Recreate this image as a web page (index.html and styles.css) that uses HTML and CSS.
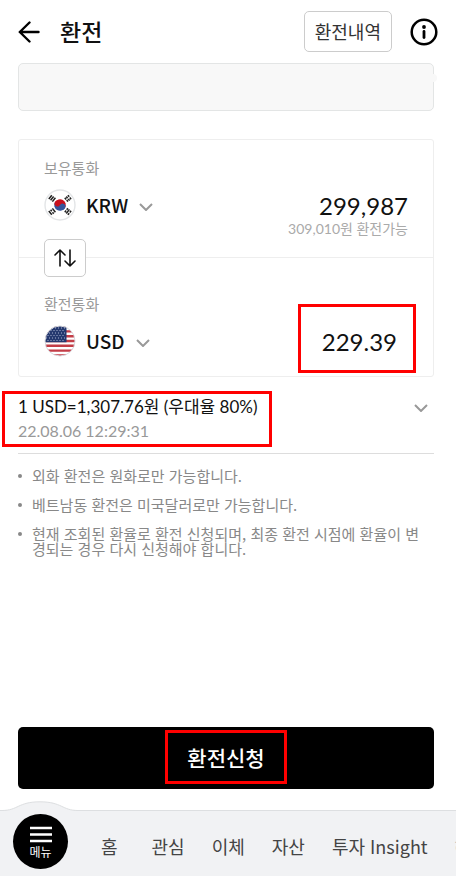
FILE: index.html
```html
<!DOCTYPE html>
<html lang="ko">
<head>
    <meta charset="UTF-8">
    <meta name="viewport" content="width=device-width, initial-scale=1.0">
    <title>환전</title>
    <link rel="stylesheet" href="styles.css">
</head>
<body>
    <header class="header">
        <button type="button" class="icon-btn" aria-label="뒤로">
            <svg width="22" height="22" viewBox="0 0 22 22" fill="none" stroke="#000" stroke-width="2.4" stroke-linecap="round" stroke-linejoin="round">
                <path d="M20.5 11H1.8M11.5 1.5L1.8 11l9.7 9.5"/>
            </svg>
        </button>
        <h1>환전</h1>
        <button type="button" class="history-btn">환전내역</button>
        <button type="button" class="icon-btn" aria-label="안내">
            <svg width="28" height="28" viewBox="0 0 28 28">
                <circle cx="14" cy="14" r="12.3" fill="none" stroke="#000" stroke-width="2.5"/>
                <circle cx="14" cy="9" r="1.9"/>
                <path d="M14 13.5v6" stroke="#000" stroke-width="2.8" stroke-linecap="round"/>
            </svg>
        </button>
    </header>

    <main class="content">
        <div class="account-box"></div>

        <section class="card">
            <div class="currency-row">
                <label class="label" for="krw-amount">보유통화</label>
                <button type="button" class="currency">
                    <svg class="flag" viewBox="0 0 32 32">
                        <circle cx="16" cy="16" r="15" fill="#fff" stroke="#e3e5e7" stroke-width="1.4"/>
                        <g transform="rotate(30 16 16)">
                            <path d="M10.2 16a5.8 5.8 0 0 1 11.6 0z" fill="#c8101e"/>
                            <path d="M10.2 16a5.8 5.8 0 0 0 11.6 0z" fill="#34549c"/>
                            <circle cx="13.1" cy="16" r="2.9" fill="#c8101e"/>
                            <circle cx="18.9" cy="16" r="2.9" fill="#34549c"/>
                        </g>
                        <g stroke="#222" stroke-width="1.5">
                            <path d="M4.8 10l3-3.8M6.6 11.3l3-3.8M8.4 12.6l3-3.8"/>
                            <path d="M20.8 8.8l1.3 1.7M22.7 11l1.2 1.6M22.3 7.5l1.3 1.7M24.3 9.9l1.3 1.7M23.9 6.1l1.3 1.7M25.8 8.5l1.3 1.7"/>
                            <path d="M4.8 22l3 3.8M6.6 20.7l1.2 1.6M8.5 23.2l1.2 1.6M8.4 19.4l3 3.8"/>
                            <path d="M20.8 23.2l1.3-1.7M22.7 20.8l1.2-1.6M22.3 24.5l3.1-4.1M23.9 25.9l1.3-1.7M25.8 23.5l1.3-1.7"/>
                        </g>
                    </svg>
                    KRW
                    <svg class="chevron" viewBox="0 0 14 8"><path d="M1 1l6 6 6-6"/></svg>
                </button>
                <input class="amount" id="krw-amount" type="text" inputmode="decimal" value="299,987">
                <p class="available">309,010원 환전가능</p>
            </div>

            <div class="currency-row target">
                <button type="button" class="swap-btn" aria-label="통화 바꾸기">
                    <svg width="22" height="18" viewBox="0 0 22 18" fill="none" stroke="#111" stroke-width="1.6" stroke-linecap="round" stroke-linejoin="round">
                        <path d="M6 17V1M1 6l5-5 5 5M16 1v16M11 12l5 5 5-5"/>
                    </svg>
                </button>
                <label class="label" for="usd-amount">환전통화</label>
                <button type="button" class="currency">
                    <svg class="flag" viewBox="0 0 32 32">
                        <clipPath id="flag-round"><circle cx="16" cy="16" r="15"/></clipPath>
                        <g clip-path="url(#flag-round)">
                            <path fill="#fff" d="M0 0h32v32H0z"/>
                            <path stroke="#c33d47" stroke-width="2.4" d="M0 1.6h32M0 6.4h32M0 11.2h32M0 16h32M0 20.8h32M0 25.6h32M0 30.4h32"/>
                            <path fill="#25396f" d="M0 0h22.5v17.2H0z"/>
                            <path stroke="#aab5d2" stroke-width="1" stroke-dasharray="1 2" d="M2 3h20M3.5 5.5h18M2 8h20M3.5 10.5h18M2 13h20M3.5 15.5h18"/>
                        </g>
                        <circle cx="16" cy="16" r="15" fill="none" stroke="#d9dbe0"/>
                    </svg>
                    USD
                    <svg class="chevron" viewBox="0 0 14 8"><path d="M1 1l6 6 6-6"/></svg>
                </button>
                <div class="amount-box marked">
                    <input class="amount" id="usd-amount" type="text" inputmode="decimal" value="229.39">
                </div>
            </div>
        </section>

        <section class="rate">
            <div class="rate-info marked">
                <p class="rate-value">1 USD=1,307.76원 (우대율 80%)</p>
                <p class="rate-time">22.08.06 12:29:31</p>
            </div>
            <button type="button" class="icon-btn rate-toggle" aria-label="환율 상세">
                <svg class="chevron" viewBox="0 0 14 8"><path d="M1 1l6 6 6-6"/></svg>
            </button>
        </section>

        <ul class="notes">
            <li>외화 환전은 원화로만 가능합니다.</li>
            <li>베트남동 환전은 미국달러로만 가능합니다.</li>
            <li>현재 조회된 환율로 환전 신청되며, 최종 환전 시점에 환율이 변경되는 경우 다시 신청해야 합니다.</li>
        </ul>

        <button type="button" class="submit-btn"><span class="marked">환전신청</span></button>
    </main>

    <nav class="bottom-nav">
        <svg class="bump" width="76" height="12" viewBox="0 0 76 12">
            <path d="M0 9.5C16 9.5 16 .8 38 .8S60 9.5 76 9.5V12H0z" fill="#f1f2f4"/>
            <path d="M0 9.5C16 9.5 16 .8 38 .8S60 9.5 76 9.5" fill="none" stroke="#dddfe1"/>
        </svg>
        <button type="button" class="menu-btn">
            <svg width="22" height="17" viewBox="0 0 22 17" stroke="#fff" stroke-width="2.6">
                <path d="M0 2h22M0 8.5h22M0 15h22"/>
            </svg>
            메뉴
        </button>
        <div class="nav-links">
            <a class="home" href="#">홈</a>
            <a href="#">관심</a>
            <a href="#">이체</a>
            <a href="#">자산</a>
            <a href="#">투자 Insight</a>
            <a class="faded" href="#">해외</a>
        </div>
    </nav>
</body>
</html>
```

FILE: styles.css
```css
:root {
    --text: #111;
    --muted: #999;
    --border: #eee;
    --mark: #f00;
    --font: "Noto Sans CJK KR", sans-serif;
    --font-number: Lato, "Noto Sans CJK KR", sans-serif;
}

* {
    margin: 0;
    padding: 0;
    box-sizing: border-box;
}

body {
    font-family: var(--font);
    background: #fff;
    color: var(--text);
    min-height: 100vh;
    display: flex;
    flex-direction: column;
    overflow-x: hidden;
}

button,
input {
    font: inherit;
    color: inherit;
    background: none;
    border: none;
}

button {
    cursor: pointer;
}

svg {
    display: block;
}

/* header */
.header {
    display: flex;
    align-items: center;
    height: 63px;
    padding: 0 18px;
}

.header h1 {
    flex: 1;
    margin-left: 20px;
    padding-bottom: 2px;
    font-size: 23px;
    font-weight: 500;
    line-height: 32px;
}

.history-btn {
    height: 41px;
    margin-right: 18px;
    padding: 0 10px 2px;
    border: 1px solid #ccc;
    border-radius: 5px;
    font-size: 18px;
    line-height: 36px;
    color: #333;
}

.content {
    flex: 1;
    display: flex;
    flex-direction: column;
    padding: 0 22px 21px 18px;
}

.account-box {
    position: relative;
    height: 48px;
    margin-bottom: 28px;
    background: #f8f8f8;
    border: 1px solid #e3e5e5;
    border-radius: 5px;
}

.account-box::after {
    content: "";
    position: absolute;
    top: 10px;
    right: -4px;
    width: 8px;
    height: 8px;
    border-radius: 50%;
    background: #f8f8f8;
}

/* currencies */
.card {
    border: 1px solid var(--border);
    border-radius: 3px;
}

.currency-row {
    position: relative;
    display: grid;
    grid-template-columns: auto 1fr;
    grid-template-rows: 20px 34px 14px;
    row-gap: 10px;
    padding: 18px 25px 11px;
}

.currency-row.target {
    grid-template-rows: 20px 34px;
    padding-top: 36px;
    padding-bottom: 18px;
    border-top: 1px solid var(--border);
}

.label {
    grid-column: 1 / 3;
    font-size: 15px;
    line-height: 20px;
    color: var(--muted);
}

.currency {
    display: flex;
    align-items: center;
    font-size: 19px;
    font-weight: 500;
    line-height: 34px;
}

.flag {
    width: 32px;
    height: 32px;
    margin-right: 10px;
}

.chevron {
    width: 14px;
    height: 8px;
    fill: none;
    stroke: #999;
    stroke-width: 2;
}

.currency .chevron {
    margin: 3px 0 0 11px;
}

.amount {
    width: 100%;
    min-width: 0;
    height: 34px;
    text-align: right;
    font-family: var(--font-number);
    font-size: 24px;
    outline: none;
}

.available {
    grid-column: 1 / 3;
    margin-top: -10px;
    text-align: right;
    font-family: var(--font-number);
    font-size: 14px;
    line-height: 14px;
    color: #aaa;
}

.swap-btn {
    position: absolute;
    top: -19px;
    left: 25px;
    width: 42px;
    height: 38px;
    display: flex;
    align-items: center;
    justify-content: center;
    background: #fff;
    border: 1px solid #ccc;
    border-radius: 5px;
}

/* red highlight frame */
.marked {
    position: relative;
}

.marked::after {
    content: "";
    position: absolute;
    border: 3px solid var(--mark);
    pointer-events: none;
}

.amount-box {
    justify-self: end;
    width: 100px;
    padding-right: 11px;
}

.amount-box::after {
    inset: -20px -8px -15px -10px;
}

/* rate */
.rate {
    display: flex;
    justify-content: space-between;
    align-items: flex-start;
    padding: 18px 6px 10px 0;
    border-bottom: 1px solid #ddd;
}

.rate-info::after {
    inset: -4px -15px -4px -16px;
}

.rate-value {
    font-family: var(--font-number);
    font-size: 17px;
    line-height: 24px;
}

.rate-time {
    font-family: var(--font-number);
    font-size: 16px;
    line-height: 24px;
    color: var(--muted);
}

.rate-toggle {
    padding-top: 9px;
}

.notes {
    list-style: none;
    padding: 14px 10px 24px 0;
    font-size: 15px;
    line-height: 15px;
    color: #888;
}

.notes li {
    position: relative;
    margin-bottom: 14px;
    padding-left: 14px;
}

.notes li::before {
    content: "";
    position: absolute;
    top: 6px;
    left: 0;
    width: 4px;
    height: 4px;
    border-radius: 50%;
    background: #888;
}

.submit-btn {
    height: 62px;
    margin-top: auto;
    padding-bottom: 2px;
    background: #000;
    border-radius: 5px;
    color: #fff;
    font-size: 21px;
    font-weight: 500;
}

.submit-btn .marked::after {
    inset: -12px -22px;
}

/* bottom navigation */
.bottom-nav {
    position: relative;
    display: flex;
    align-items: center;
    height: 66px;
    padding-left: 13px;
    background: #f1f2f4;
    border-top: 1px solid #dddfe1;
}

.bump {
    position: absolute;
    top: -10px;
    left: 2px;
}

.menu-btn {
    position: relative;
    flex: none;
    display: flex;
    flex-direction: column;
    align-items: center;
    gap: 2px;
    width: 55px;
    height: 55px;
    margin-bottom: 4px;
    padding-top: 12px;
    border-radius: 50%;
    background: #000;
    color: #fff;
    font-size: 12px;
    line-height: 14px;
}

.nav-links {
    flex: 1;
    display: flex;
    gap: 27px;
    margin-left: 33px;
    padding-top: 4px;
    overflow: hidden;
    white-space: nowrap;
}

.nav-links a {
    color: #444;
    font-size: 18px;
    line-height: 28px;
    text-decoration: none;
}

.nav-links .home {
    margin-right: 7px;
}

.nav-links .faded {
    color: #bbb;
}
```
